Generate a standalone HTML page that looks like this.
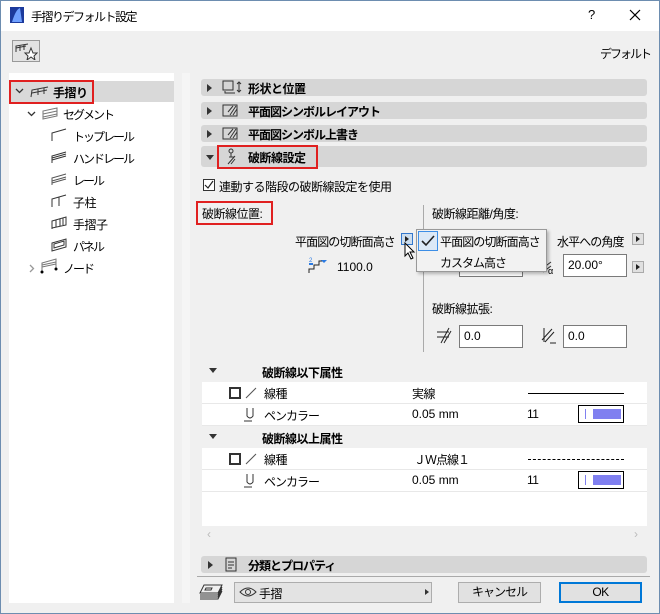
<!DOCTYPE html>
<html><head><meta charset="utf-8"><style>
*{margin:0;padding:0;box-sizing:border-box}
body{width:660px;height:614px;overflow:hidden;background:#f0f0f0;font-family:"Liberation Sans","Noto Sans CJK JP",sans-serif;font-size:12px;color:#000;position:relative;letter-spacing:-0.5px}
.a{position:absolute;white-space:nowrap}
.k{letter-spacing:-2px}
.hdr{position:absolute;left:201px;width:446px;background:#d6d6d6;border-radius:3px;font-weight:bold}
.tri{position:absolute;width:0;height:0;border-top:4px solid transparent;border-bottom:4px solid transparent;border-left:5px solid #333}
.trid{position:absolute;width:0;height:0;border-left:4px solid transparent;border-right:4px solid transparent;border-top:5px solid #333}
.red{position:absolute;border:2px solid #e02020}
.inp{position:absolute;background:#fff;border:1px solid #7a7a7a;padding:3px 4px;height:23px}
.btn{position:absolute;width:12px;height:12px;background:#e0e0e0;border:1px solid #aaa}
.btn:after{content:"";position:absolute;left:3px;top:2px;border-top:3px solid transparent;border-bottom:3px solid transparent;border-left:4px solid #222}
.row{position:absolute;left:202px;width:445px;background:#fff;border-bottom:1px solid #e8e8e8;height:22px}
</style></head><body>
<div class="a" style="left:0;top:0;width:660px;height:614px;border:1px solid #6d8db0;z-index:9;pointer-events:none"></div>
<div class="a" style="left:0;top:0;width:660px;height:31px;background:#fff"></div>
<svg class="a" style="left:10px;top:7px" width="14" height="16"><rect width="14" height="16" fill="#1c3a9c"/><path d="M2 15 Q6 2 10 1 L12 15Z" fill="#6fa0ff"/></svg>
<div class="a k" style="left:31px;top:8px;letter-spacing:-1.5px">手摺りデフォルト設定</div>
<div class="a" style="left:588px;top:7px;font-size:13px">?</div>
<svg class="a" style="left:629px;top:9px" width="12" height="12"><path d="M1 1 L11 11 M11 1 L1 11" stroke="#000" stroke-width="1.2"/></svg>
<div class="a" style="left:12px;top:40px;width:28px;height:22px;border:1px solid #999;background:#e3e3e3"></div>
<svg class="a" style="left:14px;top:42px" width="24" height="18"><path d="M2 10 L2 4 L14 2 M2 6 L12 4 M6 9 L6 4 M10 8 L10 3" stroke="#333" fill="none"/><path d="M17 6 L19 11 L23 11 L20 14 L21 18 L17 15 L13 18 L14 14 L11 11 L15 11Z" stroke="#333" fill="#fff"/></svg>
<div class="a k" style="right:10px;top:45px">デフォルト</div>
<!-- left tree -->
<div class="a" style="left:9px;top:73px;width:165px;height:530px;background:#fff"></div>
<div class="a" style="left:9px;top:81px;width:165px;height:21px;background:#d9d9d9"></div>
<div class="red" style="left:9px;top:80px;width:85px;height:24px"></div>
<svg class="a" style="left:15px;top:88px" width="9" height="6"><path d="M1 1 L4.5 4.5 L8 1" stroke="#333" fill="none" stroke-width="1.3"/></svg>
<svg class="a" style="left:30px;top:86px" width="20" height="12"><path d="M1 11 L2 4 L18 1 M2 7 L17 4 M8 9 L8 3 M14 8 L14 2" stroke="#333" fill="none"/></svg>
<div class="a" style="left:53px;top:84px;font-weight:bold">手摺り</div>
<svg class="a" style="left:27px;top:111px" width="9" height="6"><path d="M1 1 L4.5 4.5 L8 1" stroke="#333" fill="none" stroke-width="1.3"/></svg>
<svg class="a" style="left:41px;top:107px" width="18" height="13"><path d="M2 12 L2 4 L16 1 L16 9 Z M2 7 L16 4 M2 10 L16 7" stroke="#777" fill="none"/></svg>
<div class="a k" style="left:63px;top:106px">セグメント</div>
<svg class="a" style="left:50px;top:128px" width="18" height="14"><path d="M2 13 L2 5 L16 1" stroke="#333" fill="none"/></svg>
<div class="a k" style="left:73px;top:128px">トップレール</div>
<svg class="a" style="left:50px;top:150px" width="18" height="14"><path d="M2 13 L2 6 L16 2 M2 8 L16 4 M2 10 L16 6" stroke="#333" fill="none"/></svg>
<div class="a k" style="left:73px;top:150px">ハンドレール</div>
<svg class="a" style="left:50px;top:172px" width="18" height="14"><path d="M2 13 L2 6 L16 2 M2 9 L16 5 M2 11 L16 7" stroke="#555" fill="none"/></svg>
<div class="a k" style="left:73px;top:172px">レール</div>
<svg class="a" style="left:50px;top:194px" width="18" height="14"><path d="M2 13 L2 5 L16 1 M9 12 L9 3" stroke="#333" fill="none"/></svg>
<div class="a" style="left:73px;top:194px">子柱</div>
<svg class="a" style="left:50px;top:216px" width="18" height="14"><path d="M2 13 L2 5 L16 1 L16 9 L2 12 M6 11 L6 4 M10 10 L10 3 M13 9 L13 2" stroke="#333" fill="none"/></svg>
<div class="a" style="left:73px;top:216px">手摺子</div>
<svg class="a" style="left:50px;top:238px" width="18" height="14"><path d="M2 13 L2 5 L16 1 L16 9 Z M4 10 L4 6 L14 3 L14 7Z" stroke="#333" fill="none"/></svg>
<div class="a k" style="left:73px;top:238px">パネル</div>
<svg class="a" style="left:29px;top:264px" width="6" height="9"><path d="M1 1 L4.5 4.5 L1 8" stroke="#999" fill="none" stroke-width="1.3"/></svg>
<svg class="a" style="left:38px;top:257px" width="20" height="17"><path d="M4 15 L4 6 L18 2 L18 12 M4 8 L18 5 M4 10 L18 7" stroke="#777" fill="none"/><circle cx="4" cy="15" r="1.5"/><circle cx="18" cy="12" r="1.5"/></svg>
<div class="a k" style="left:63px;top:260px">ノード</div>
<div class="a" style="left:182px;top:73px;width:8px;height:530px;background:#f5f5f5"></div>
<!-- headers -->
<div class="hdr" style="top:79px;height:17px"></div><div class="tri" style="left:207px;top:84px"></div>
<svg class="a" style="left:222px;top:80px" width="24" height="15"><rect x="1" y="1" width="10" height="9" stroke="#333" fill="none"/><path d="M3 11 L3 13 L13 13 M17 2 L17 12 M15 4 L17 2 L19 4 M15 10 L17 12 L19 10" stroke="#333" fill="none"/></svg>
<div class="a" style="left:248px;top:80px;font-weight:bold">形状と位置</div>
<div class="hdr" style="top:102px;height:17px"></div><div class="tri" style="left:207px;top:107px"></div>
<svg class="a" style="left:222px;top:103px" width="20" height="15"><rect x="1" y="2" width="14" height="11" stroke="#333" fill="none"/><path d="M8 12 L14 3 M11 12 L15 6 M6 9 L11 3" stroke="#333"/></svg>
<div class="a" style="left:248px;top:103px;font-weight:bold;letter-spacing:-1px">平面図シンボルレイアウト</div>
<div class="hdr" style="top:125px;height:17px"></div><div class="tri" style="left:207px;top:130px"></div>
<svg class="a" style="left:222px;top:126px" width="20" height="15"><rect x="1" y="2" width="14" height="11" stroke="#333" fill="none"/><path d="M8 12 L14 3 M11 12 L15 6 M6 9 L11 3" stroke="#333"/></svg>
<div class="a" style="left:248px;top:126px;font-weight:bold;letter-spacing:-1px">平面図シンボル上書き</div>
<div class="hdr" style="top:146px;height:21px"></div><div class="trid" style="left:206px;top:155px"></div>
<div class="red" style="left:217px;top:145px;width:101px;height:24px"></div>
<svg class="a" style="left:226px;top:148px" width="12" height="17"><circle cx="5" cy="3" r="2" stroke="#333" fill="none"/><path d="M5 5 L5 9 M2 16 L9 8 M5 16 L9 11 M3 9 L8 9" stroke="#333" fill="none"/></svg>
<div class="a" style="left:248px;top:149px;font-weight:bold">破断線設定</div>
<!-- checkbox -->
<div class="a" style="left:203px;top:179px;width:12px;height:12px;border:1px solid #333;background:#fff"></div>
<svg class="a" style="left:204px;top:180px" width="10" height="10"><path d="M1 5 L4 8 L9 1" stroke="#222" fill="none" stroke-width="1.2"/></svg>
<div class="a" style="left:219px;top:178px">連動する階段の破断線設定を使用</div>
<div class="red" style="left:196px;top:201px;width:77px;height:24px"></div>
<div class="a" style="left:202px;top:205px">破断線位置:</div>
<div class="a" style="left:295px;top:233px;letter-spacing:-0.9px">平面図の切断面高さ</div>
<div class="btn" style="left:401px;top:233px;border-color:#3377cc;background:#cde"></div>
<svg class="a" style="left:404px;top:242px" width="12" height="18"><path d="M1 1 L1 14 L4 11 L7 17 L9 16 L6 10 L10 10Z" fill="#fff" stroke="#000"/></svg>
<svg class="a" style="left:308px;top:257px" width="20" height="17"><path d="M1 16 L1 12 L6 12 L6 8 L11 8 L11 4 L16 4" stroke="#222" fill="none"/><path d="M1 7 L5 7" stroke="#2a7ae2" stroke-width="2"/><text x="1" y="5" font-size="6" fill="#2a7ae2">2</text><path d="M13 3 L16 6 L19 3Z" fill="#2a7ae2"/></svg>
<div class="a" style="left:337px;top:260px;letter-spacing:0">1100.0</div>
<div class="a" style="left:423px;top:205px;width:1px;height:147px;background:#aaa"></div>
<div class="a" style="left:432px;top:205px">破断線距離/角度:</div>
<div class="a" style="left:557px;top:233px;letter-spacing:-0.9px">水平への角度</div>
<div class="btn" style="left:632px;top:233px"></div>
<div class="inp" style="left:459px;top:254px;width:64px"></div>
<svg class="a" style="left:542px;top:259px" width="16" height="16"><path d="M1 9 L9 3 M1 13 L9 7" stroke="#333"/><text x="6" y="15" font-size="9">α</text></svg>
<div class="inp" style="left:563px;top:254px;width:64px;letter-spacing:0">20.00°</div>
<div class="btn" style="left:632px;top:261px"></div>
<!-- dropdown -->
<div class="a" style="left:416px;top:229px;width:131px;height:43px;background:#f2f2f2;border:1px solid #999;box-shadow:2px 2px 3px rgba(0,0,0,.25)"></div>
<div class="a" style="left:418px;top:231px;width:20px;height:20px;border:1px solid #3d8ee6;background:#dce9f7"></div>
<svg class="a" style="left:421px;top:235px" width="14" height="12"><path d="M1 6 L5 10 L13 1" stroke="#222" fill="none" stroke-width="1.6"/></svg>
<div class="a" style="left:440px;top:233px;letter-spacing:-0.9px">平面図の切断面高さ</div>
<div class="a" style="left:440px;top:254px;letter-spacing:-1px">カスタム高さ</div>
<div class="a" style="left:432px;top:300px">破断線拡張:</div>
<svg class="a" style="left:435px;top:326px" width="18" height="20"><path d="M2 6 L14 6 M2 11 L14 11 M6 17 L14 2 M9 17 L16 5" stroke="#222"/></svg>
<div class="inp" style="left:459px;top:325px;width:64px;letter-spacing:0">0.0</div>
<svg class="a" style="left:540px;top:326px" width="18" height="20"><path d="M2 14 L12 3 M5 16 L14 6 M4 2 L4 16 M10 17 L16 17" stroke="#222"/></svg>
<div class="inp" style="left:563px;top:325px;width:64px;letter-spacing:0">0.0</div>
<!-- table -->
<div class="a" style="left:202px;top:362px;width:445px;height:20px;background:#f0f0f0"></div>
<div class="trid" style="left:209px;top:368px"></div>
<div class="a" style="left:262px;top:364px;font-weight:bold">破断線以下属性</div>
<div class="row" style="top:382px"></div>
<div class="a" style="left:229px;top:387px;width:12px;height:12px;border:2px solid #333"></div>
<svg class="a" style="left:245px;top:387px" width="12" height="12"><path d="M1 11 L11 1" stroke="#555"/></svg>
<div class="a" style="left:264px;top:385px">線種</div>
<div class="a" style="left:412px;top:385px">実線</div>
<div class="a" style="left:528px;top:393px;width:96px;height:1px;background:#000"></div>
<div class="row" style="top:404px"></div>
<svg class="a" style="left:244px;top:407px" width="12" height="16"><path d="M3 1 L3 9 Q6 13 9 9 L9 1 M0 14 L8 14" stroke="#333" fill="none"/></svg>
<div class="a k" style="left:264px;top:407px;letter-spacing:-1px">ペンカラー</div>
<div class="a" style="left:412px;top:407px;letter-spacing:0">0.05 mm</div>
<div class="a" style="left:527px;top:407px">11</div>
<div class="a" style="left:578px;top:405px;width:46px;height:18px;border:1px solid #000;background:#fff"></div>
<div class="a" style="left:585px;top:409px;width:1px;height:10px;background:#8080f0"></div>
<div class="a" style="left:593px;top:409px;width:28px;height:10px;background:#8080f0"></div>
<div class="a" style="left:202px;top:426px;width:445px;height:21px;background:#f0f0f0"></div>
<div class="trid" style="left:209px;top:434px"></div>
<div class="a" style="left:262px;top:430px;font-weight:bold">破断線以上属性</div>
<div class="row" style="top:448px"></div>
<div class="a" style="left:229px;top:453px;width:12px;height:12px;border:2px solid #333"></div>
<svg class="a" style="left:245px;top:453px" width="12" height="12"><path d="M1 11 L11 1" stroke="#555"/></svg>
<div class="a" style="left:264px;top:451px">線種</div>
<div class="a" style="left:414px;top:451px;letter-spacing:-1px">ＪＷ点線１</div>
<div class="a" style="left:528px;top:459px;width:96px;height:0;border-top:1px dashed #000"></div>
<div class="row" style="top:470px"></div>
<svg class="a" style="left:244px;top:473px" width="12" height="16"><path d="M3 1 L3 9 Q6 13 9 9 L9 1 M0 14 L8 14" stroke="#333" fill="none"/></svg>
<div class="a k" style="left:264px;top:473px;letter-spacing:-1px">ペンカラー</div>
<div class="a" style="left:412px;top:473px;letter-spacing:0">0.05 mm</div>
<div class="a" style="left:527px;top:473px">11</div>
<div class="a" style="left:578px;top:471px;width:46px;height:18px;border:1px solid #000;background:#fff"></div>
<div class="a" style="left:585px;top:475px;width:1px;height:10px;background:#8080f0"></div>
<div class="a" style="left:593px;top:475px;width:28px;height:10px;background:#8080f0"></div>
<div class="a" style="left:202px;top:492px;width:445px;height:34px;background:#fff"></div>
<div class="a" style="left:207px;top:527px;color:#bbb">‹</div>
<div class="a" style="left:634px;top:527px;color:#bbb">›</div>
<div class="hdr" style="top:556px;height:17px"></div><div class="tri" style="left:208px;top:561px"></div>
<svg class="a" style="left:225px;top:557px" width="12" height="15"><rect x="1" y="1" width="10" height="13" stroke="#333" fill="none"/><path d="M3 5 L9 5 M3 8 L9 8 M3 11 L7 11" stroke="#333"/></svg>
<div class="a" style="left:248px;top:557px;font-weight:bold;letter-spacing:-1px">分類とプロパティ</div>
<div class="a" style="left:197px;top:576px;width:453px;height:1px;background:#aaa"></div>
<svg class="a" style="left:198px;top:583px" width="26" height="18"><path d="M6 2 L24 2 L20 10 L2 10Z M2 12 L20 12 L24 4 M2 14 L20 14 L24 6 M2 16 L20 16 L24 8 M8 5 L14 5 L13 7 L7 7Z" stroke="#333" fill="none"/></svg>
<div class="a" style="left:234px;top:582px;width:198px;height:21px;background:#e3e3e3;border:1px solid #adadad"></div>
<svg class="a" style="left:239px;top:586px" width="18" height="12"><path d="M1 6 Q9 -2 17 6 Q9 14 1 6Z" stroke="#333" fill="none"/><circle cx="9" cy="6" r="2.5" stroke="#333" fill="none"/></svg>
<div class="a" style="left:259px;top:585px">手摺</div>
<div class="a" style="left:425px;top:589px;border-top:3px solid transparent;border-bottom:3px solid transparent;border-left:4px solid #333"></div>
<div class="a" style="left:458px;top:582px;width:83px;height:21px;background:#e1e1e1;border:1px solid #adadad;text-align:center;line-height:19px;letter-spacing:-1px">キャンセル</div>
<div class="a" style="left:559px;top:582px;width:83px;height:21px;background:#e1e1e1;border:2px solid #0078d7;text-align:center;line-height:17px">OK</div>
</body></html>
